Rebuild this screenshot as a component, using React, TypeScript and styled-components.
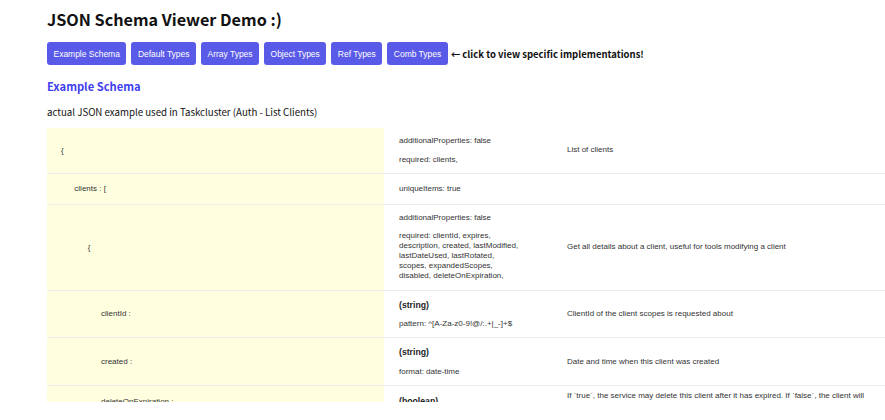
import React from "react";
import styled, { createGlobalStyle } from "styled-components";

const GlobalStyle = createGlobalStyle`
  html, body { margin: 0; padding: 0; background: #ffffff; }
  body { font-family: "Noto Sans CJK KR", "Open Sans", sans-serif; color: #111; }
`;

const Page = styled.div`
  height: 402px;
  overflow: hidden;
  padding-left: 47px;
  box-sizing: border-box;
`;

const Title = styled.h1`
  margin: 9px 0 0;
  font-family: "Noto Sans CJK KR", "Open Sans", sans-serif;
  font-size: 16.2px;
  line-height: 20px;
  font-weight: 700;
  color: #111;
`;

const Toolbar = styled.div`
  display: flex;
  align-items: center;
  gap: 5px;
  margin-top: 13px;
`;

const TabButton = styled.button`
  height: 23px;
  padding: 0 6.5px;
  border: none;
  border-radius: 3px;
  background: #5a5ae8;
  color: #ffffff;
  font-family: "Liberation Sans", Arial, sans-serif;
  font-size: 8.47px;
  cursor: pointer;
`;

const Hint = styled.span`
  margin-left: -2px;
  font-family: "Noto Sans CJK KR", "Open Sans", sans-serif;
  font-size: 9.5px;
  font-weight: 700;
  color: #111;
`;

const SectionTitle = styled.h2`
  margin: 12px 0 0;
  font-family: "Noto Sans CJK KR", "Open Sans", sans-serif;
  font-size: 11.2px;
  line-height: 18px;
  font-weight: 700;
  color: #3f3fee;
`;

const Description = styled.p`
  margin: 10px 0 0;
  font-family: "Noto Sans CJK KR", "Open Sans", sans-serif;
  font-size: 9.7px;
  line-height: 14px;
  color: #111;
`;

const Table = styled.div`
  margin-top: 9px;
  font-family: "Liberation Sans", Arial, sans-serif;
  font-size: 8px;
  color: #333;
`;

const Row = styled.div`
  display: grid;
  grid-template-columns: 337px 168px 1fr;
  border-bottom: 1px solid #ececec;
`;

const KeyCell = styled.div<{ $depth: number }>`
  display: flex;
  align-items: center;
  background: #ffffe0;
  padding: 9.5px 14px 9.5px ${(p) => 14 + p.$depth * 13.33}px;
  line-height: 11px;
`;

const MetaCell = styled.div`
  display: flex;
  flex-direction: column;
  justify-content: center;
  gap: 8.6px;
  padding: 8.1px 31px 8.1px 15px;
  line-height: 10px;
`;

const TypeLine = styled.div`
  font-weight: 700;
  font-size: 8.7px;
  line-height: 12px;
  color: #222;
`;

const MetaLine = styled.div``;

const DescCell = styled.div`
  display: flex;
  align-items: center;
  padding: 0 12px 0 15px;
  line-height: 10px;
`;

type RowData = {
  key: string;
  depth: number;
  type?: string;
  meta: string[];
  desc?: string;
};

const rows: RowData[] = [
  {
    key: "{",
    depth: 0,
    meta: ["additionalProperties: false", "required: clients,"],
    desc: "List of clients",
  },
  { key: "clients : [", depth: 1, meta: ["uniqueItems: true"] },
  {
    key: "{",
    depth: 2,
    meta: [
      "additionalProperties: false",
      "required: clientId, expires, description, created, lastModified, lastDateUsed, lastRotated, scopes, expandedScopes, disabled, deleteOnExpiration,",
    ],
    desc: "Get all details about a client, useful for tools modifying a client",
  },
  {
    key: "clientId :",
    depth: 3,
    type: "(string)",
    meta: ["pattern: ^[A-Za-z0-9!@/:.+|_-]+$"],
    desc: "ClientId of the client scopes is requested about",
  },
  {
    key: "created :",
    depth: 3,
    type: "(string)",
    meta: ["format: date-time"],
    desc: "Date and time when this client was created",
  },
  {
    key: "deleteOnExpiration :",
    depth: 3,
    type: "(boolean)",
    meta: [],
    desc:
      "If `true`, the service may delete this client after it has expired. If `false`, the client will remain in place until it is explicitly deleted.",
  },
];

const tabs = [
  "Example Schema",
  "Default Types",
  "Array Types",
  "Object Types",
  "Ref Types",
  "Comb Types",
];

export default function App() {
  return (
    <>
      <GlobalStyle />
      <Page>
        <Title>JSON Schema Viewer Demo :)</Title>
        <Toolbar>
          {tabs.map((t) => (
            <TabButton key={t}>{t}</TabButton>
          ))}
          <Hint>← click to view specific implementations!</Hint>
        </Toolbar>
        <SectionTitle>Example Schema</SectionTitle>
        <Description>
          actual JSON example used in Taskcluster (Auth - List Clients)
        </Description>
        <Table>
          {rows.map((r, i) => (
            <Row key={i}>
              <KeyCell $depth={r.depth}>{r.key}</KeyCell>
              <MetaCell>
                {r.type && <TypeLine>{r.type}</TypeLine>}
                {r.meta.map((m, j) => (
                  <MetaLine key={j}>{m}</MetaLine>
                ))}
              </MetaCell>
              <DescCell>{r.desc}</DescCell>
            </Row>
          ))}
        </Table>
      </Page>
    </>
  );
}
